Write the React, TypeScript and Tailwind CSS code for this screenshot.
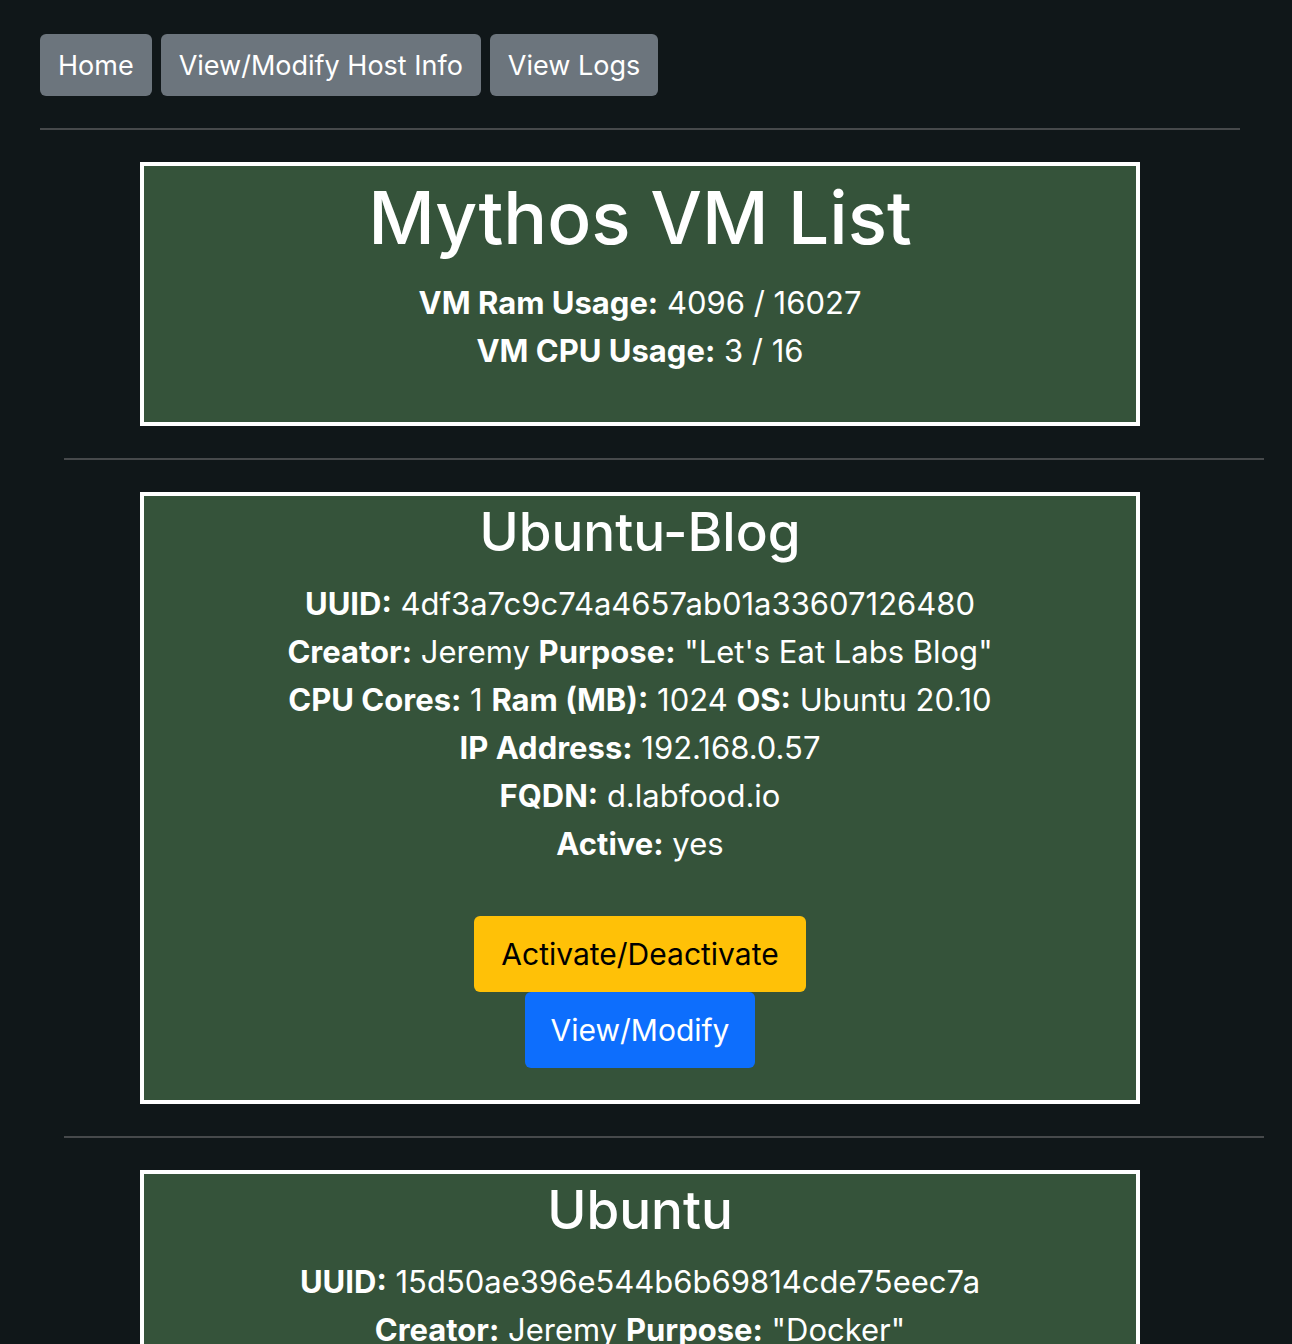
import React from 'react'

type Vm = {
  name: string
  uuid: string
  creator: string
  purpose: string
  cores: number
  ram: number
  os: string
  ip: string
  fqdn: string
  active: string
}

const VMS: Vm[] = [
  {
    name: 'Ubuntu-Blog',
    uuid: '4df3a7c9c74a4657ab01a33607126480',
    creator: 'Jeremy',
    purpose: '"Let\'s Eat Labs Blog"',
    cores: 1,
    ram: 1024,
    os: 'Ubuntu 20.10',
    ip: '192.168.0.57',
    fqdn: 'd.labfood.io',
    active: 'yes',
  },
  {
    name: 'Ubuntu',
    uuid: '15d50ae396e544b6b69814cde75eec7a',
    creator: 'Jeremy',
    purpose: '"Docker"',
    cores: 2,
    ram: 2048,
    os: 'Ubuntu 20.04',
    ip: '192.168.0.58',
    fqdn: 'docker.labfood.io',
    active: 'yes',
  },
]

function NavButton({ label }: { label: string }) {
  return (
    <button className="h-[62px] px-[18px] rounded-[6px] bg-[#6c757d] text-white text-[27px] leading-[39px]">
      {label}
    </button>
  )
}

function VmCard({ vm }: { vm: Vm }) {
  return (
    <div className="ml-[140px] w-[1000px] border-4 border-white bg-[#35533a] pt-[5px] pb-[32px] flex flex-col items-center text-white">
      <h2 className="text-[53px] leading-[62px] font-medium mb-[17px]">{vm.name}</h2>
      <div className="text-[31px] leading-[48px] text-center">
        <p><b>UUID:</b> {vm.uuid}</p>
        <p><b>Creator:</b> {vm.creator} <b>Purpose:</b> {vm.purpose}</p>
        <p><b>CPU Cores:</b> {vm.cores} <b>Ram (MB):</b> {vm.ram} <b>OS:</b> {vm.os}</p>
        <p><b>IP Address:</b> {vm.ip}</p>
        <p><b>FQDN:</b> {vm.fqdn}</p>
        <p><b>Active:</b> {vm.active}</p>
      </div>
      <div className="mt-[48px] flex flex-col items-center">
        <button className="h-[76px] px-[27px] rounded-[6px] bg-[#ffc107] text-black text-[30px]">
          Activate/Deactivate
        </button>
        <button className="h-[76px] px-[26px] rounded-[6px] bg-[#0d6efd] text-white text-[30px]">
          View/Modify
        </button>
      </div>
    </div>
  )
}

export default function App() {
  return (
    <div className="min-h-screen bg-[#101719] pt-[34px] font-['Inter','Noto_Sans',sans-serif]">
      <div className="px-[40px]">
        <div className="flex gap-[9px]">
          <NavButton label="Home" />
          <NavButton label="View/Modify Host Info" />
          <NavButton label="View Logs" />
        </div>
        <hr className="mt-[32px] w-[1200px] border-t-2 border-[#46494b]" />
      </div>

      <div className="mt-[32px] ml-[140px] w-[1000px] border-4 border-white bg-[#35533a] pt-[12px] pb-[47px] flex flex-col items-center text-white">
        <h1 className="text-[73px] leading-[80px] font-medium mb-[21px]">Mythos VM List</h1>
        <div className="text-[31px] leading-[48px] text-center">
          <p><b>VM Ram Usage:</b> 4096 / 16027</p>
          <p><b>VM CPU Usage:</b> 3 / 16</p>
        </div>
      </div>

      {VMS.map((vm) => (
        <div key={vm.uuid}>
          <hr className="my-[32px] ml-[64px] w-[1200px] border-t-2 border-[#46494b]" />
          <VmCard vm={vm} />
        </div>
      ))}
    </div>
  )
}
